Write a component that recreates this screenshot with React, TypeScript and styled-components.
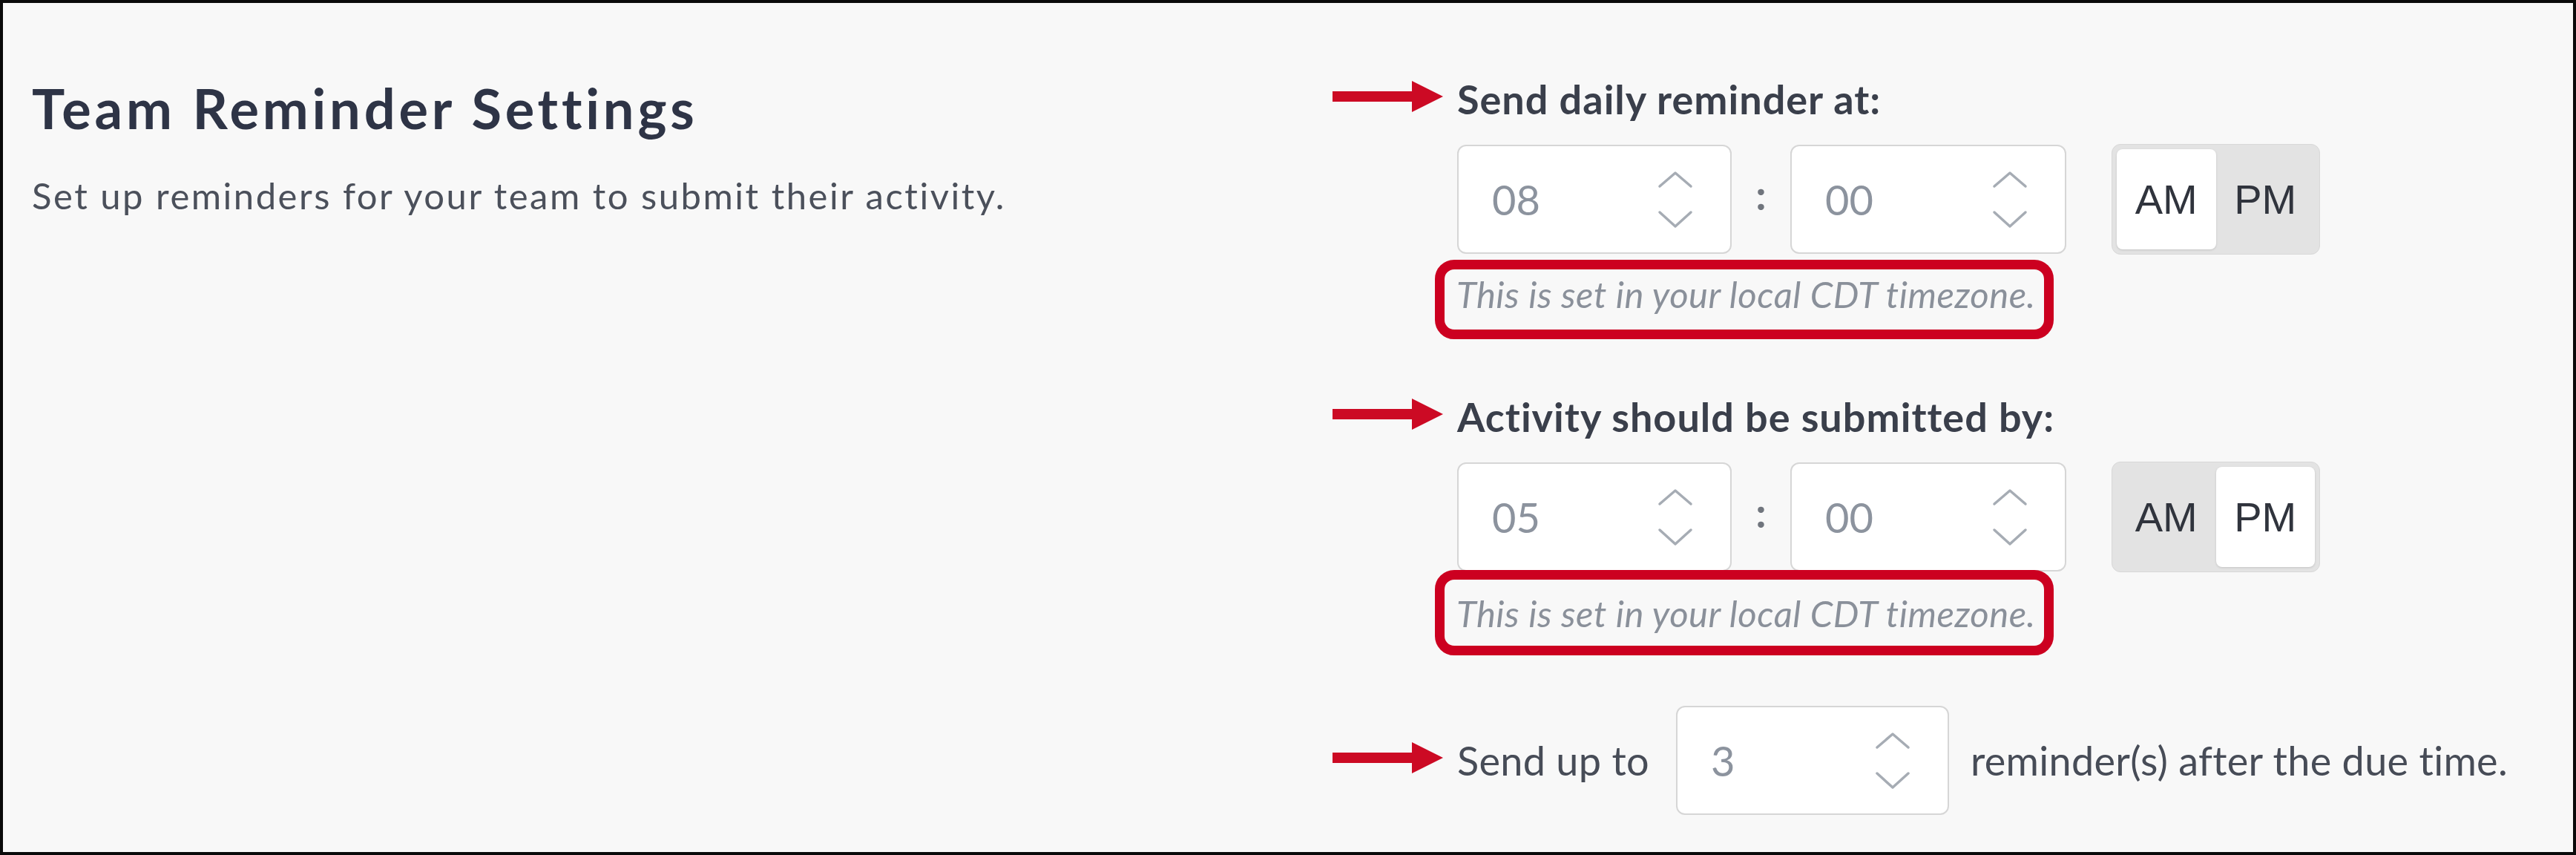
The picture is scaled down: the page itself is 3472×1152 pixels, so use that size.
import React from "react";
import styled, { createGlobalStyle } from "styled-components";

const GlobalStyle = createGlobalStyle`
  html, body { margin: 0; padding: 0; background: #ffffff; }
  body { font-family: Lato, "Noto Sans", sans-serif; -webkit-font-smoothing: antialiased; }
  * { box-sizing: border-box; }
`;

const Page = styled.div`
  width: 3472px;
  height: 1152px;
  border: 4px solid #0a0a0a;
  background: #f8f8f8;
  display: grid;
  grid-template-columns: 1960px 1fr;
  align-items: start;
  padding-top: 98px;
  overflow: hidden;
`;

const Intro = styled.section`
  padding-left: 39px;
`;

const Title = styled.h1`
  margin: 0;
  font: 700 74px/88px Lato, sans-serif;
  letter-spacing: 4.8px;
  color: #2e3446;
  white-space: nowrap;
`;

const Subtitle = styled.p`
  margin: 43px 0 0;
  font: 400 49px/60px Lato, sans-serif;
  letter-spacing: 2.5px;
  color: #4b505b;
  white-space: nowrap;
`;

const Settings = styled.section`
  display: flex;
  flex-direction: column;
`;

const LabelRow = styled.div<{ $gap: number }>`
  display: flex;
  align-items: center;
  height: 64px;
  margin-top: ${(p) => p.$gap}px;
`;

const ArrowSvg = styled.svg`
  flex: none;
  width: 149px;
  height: 42px;
  margin-left: -168px;
  margin-right: 19px;
  margin-bottom: 8px;
`;

const Label = styled.span`
  font: 700 54px/64px Lato, sans-serif;
  letter-spacing: 1px;
  color: #3a3f4b;
  white-space: nowrap;
`;

const TimeRow = styled.div`
  display: flex;
  align-items: center;
  height: 149px;
  margin-top: 28px;
`;

const SpinBox = styled.div<{ $width: number }>`
  flex: none;
  width: ${(p) => p.$width}px;
  height: 147px;
  background: #ffffff;
  border: 2px solid #d6d6d6;
  border-radius: 12px;
  display: flex;
  align-items: center;
  justify-content: space-between;
  padding: 0 50px 0 45px;
`;

const Value = styled.span`
  font: 400 56px/1 Lato, sans-serif;
  color: #8c939e;
`;

const ChevronSvg = styled.svg`
  width: 48px;
  height: 80px;
`;

const Colon = styled.span`
  flex: none;
  width: 79px;
  text-align: center;
  font: 700 56px/1 Lato, sans-serif;
  color: #70757d;
  padding-bottom: 14px;
`;

const Toggle = styled.div`
  flex: none;
  margin-left: 61px;
  width: 281px;
  height: 149px;
  padding: 6px;
  background: #e3e3e3;
  border: 1px solid #d8d8d8;
  border-radius: 12px;
  display: flex;
`;

const Segment = styled.button<{ $active: boolean }>`
  flex: 1;
  height: 100%;
  padding: 0;
  border: 0;
  border-radius: 8px;
  background: ${(p) => (p.$active ? "#ffffff" : "transparent")};
  box-shadow: ${(p) => (p.$active ? "0 1px 3px rgba(0,0,0,0.14)" : "none")};
  font: 400 56px "Liberation Sans", Arial, sans-serif;
  color: #30343d;
  cursor: pointer;
`;

const HintFrame = styled.div<{ $gap: number; $padTop: number; $padBottom: number }>`
  align-self: flex-start;
  width: 834px;
  margin-left: -30px;
  margin-top: ${(p) => p.$gap}px;
  border: 13px solid #cc0020;
  border-radius: 26px;
  padding: ${(p) => p.$padTop}px 16px ${(p) => p.$padBottom}px 16px;
`;

const HintText = styled.span`
  display: block;
  font: italic 400 49px/60px Lato, sans-serif;
  letter-spacing: 0.5px;
  color: #8a909a;
  white-space: nowrap;
`;

const CountRow = styled.div`
  display: flex;
  align-items: center;
  height: 147px;
  margin-top: 68px;
`;

const Plain = styled.span`
  font: 400 54px/64px Lato, sans-serif;
  letter-spacing: 0.3px;
  color: #474c57;
  white-space: nowrap;
`;

const CountBox = styled(SpinBox)`
  margin: 0 29px 0 36px;
`;

const Arrow = () => (
  <ArrowSvg viewBox="0 0 149 42" aria-hidden="true">
    <rect x="0" y="14" width="109" height="14" fill="#cc0a24" />
    <polygon points="107,0 149,21 107,42" fill="#cc0a24" />
  </ArrowSvg>
);

const Chevrons = () => (
  <ChevronSvg viewBox="0 0 48 80" aria-hidden="true">
    <polyline points="3,22 24,4 45,22" fill="none" stroke="#a6acb4" strokeWidth="3.5" strokeLinecap="round" strokeLinejoin="round" />
    <polyline points="3,57 24,76 45,57" fill="none" stroke="#a6acb4" strokeWidth="3.5" strokeLinecap="round" strokeLinejoin="round" />
  </ChevronSvg>
);

const Spinner = ({ value, width }: { value: string; width: number }) => (
  <SpinBox $width={width}>
    <Value>{value}</Value>
    <Chevrons />
  </SpinBox>
);

const TimePicker = ({ hour, minute, pm }: { hour: string; minute: string; pm: boolean }) => (
  <TimeRow>
    <Spinner value={hour} width={370} />
    <Colon>:</Colon>
    <Spinner value={minute} width={372} />
    <Toggle>
      <Segment $active={!pm}>AM</Segment>
      <Segment $active={pm}>PM</Segment>
    </Toggle>
  </TimeRow>
);

export default function App() {
  return (
    <>
      <GlobalStyle />
      <Page>
        <Intro>
          <Title>Team Reminder Settings</Title>
          <Subtitle>Set up reminders for your team to submit their activity.</Subtitle>
        </Intro>
        <Settings>
          <LabelRow $gap={0}>
            <Arrow />
            <Label>Send daily reminder at:</Label>
          </LabelRow>
          <TimePicker hour="08" minute="00" pm={false} />
          <HintFrame $gap={7} $padTop={3} $padBottom={18}>
            <HintText>This is set in your local CDT timezone.</HintText>
          </HintFrame>

          <LabelRow $gap={73}>
            <Arrow />
            <Label>Activity should be submitted by:</Label>
          </LabelRow>
          <TimePicker hour="05" minute="00" pm={true} />
          <HintFrame $gap={-3} $padTop={15} $padBottom={14}>
            <HintText>This is set in your local CDT timezone.</HintText>
          </HintFrame>

          <CountRow>
            <Arrow />
            <Plain>Send up to</Plain>
            <CountBox $width={368}>
              <Value>3</Value>
              <Chevrons />
            </CountBox>
            <Plain>reminder(s) after the due time.</Plain>
          </CountRow>
        </Settings>
      </Page>
    </>
  );
}
